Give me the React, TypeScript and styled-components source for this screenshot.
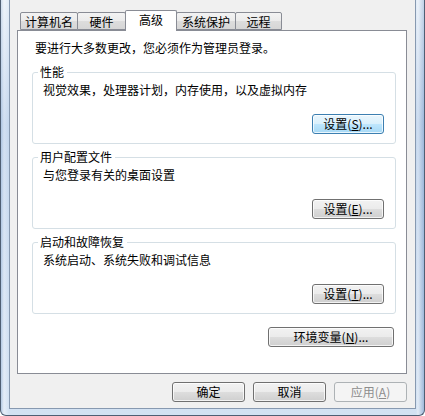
import React from 'react';
import styled, { createGlobalStyle } from 'styled-components';

const GlobalStyle = createGlobalStyle`
  html, body {
    margin: 0;
    padding: 0;
    background: #ffffff;
  }
  body {
    font-family: "Noto Sans CJK SC", "Liberation Sans", sans-serif;
    font-size: 12px;
    line-height: 14px;
    color: #000;
  }
`;

const Frame = styled.div`
  width: 425px;
  height: 416px;
  box-sizing: border-box;
  padding: 0 8px 6px 8px;
  border: 1px solid #4f5f74;
  border-top: none;
  border-radius: 0 0 6px 6px;
  background:
    linear-gradient(to bottom, rgba(255, 255, 255, 0.35), rgba(150, 180, 220, 0.25) 30%, rgba(255, 255, 255, 0) 100%),
    linear-gradient(
      to right,
      #b6cbe4 0,
      #e6eef8 3px,
      #d3e2f3 8px,
      #d3e2f3 calc(100% - 8px),
      #e2ebf6 calc(100% - 6px),
      #9fb9da 100%
    );
  display: flex;
`;

const Client = styled.div`
  flex: 1;
  display: flex;
  flex-direction: column;
  padding: 10px 8px 6px 7px;
  background: #f0f0f0;
  border: 1px solid #8799b0;
  border-top: none;
`;

const TabStrip = styled.div`
  height: 20px;
  display: flex;
  align-items: flex-end;
  padding-left: 3px;
`;

const Tab = styled.div<{ $w: number; $active?: boolean }>`
  width: ${(p) => p.$w}px;
  height: ${(p) => (p.$active ? 21 : 18)}px;
  margin-bottom: ${(p) => (p.$active ? -1 : 0)}px;
  margin-left: -1px;
  box-sizing: border-box;
  border: 1px solid #898c95;
  border-bottom: ${(p) => (p.$active ? 'none' : '1px solid #898c95')};
  border-radius: 2px 2px 0 0;
  background: ${(p) =>
    p.$active
      ? '#ffffff'
      : 'linear-gradient(#f3f3f3 0%, #ebebeb 50%, #dddddd 51%, #d6d6d6 100%)'};
  position: relative;
  z-index: ${(p) => (p.$active ? 2 : 1)};
  display: flex;
  align-items: ${(p) => (p.$active ? 'flex-start' : 'center')};
  padding-top: ${(p) => (p.$active ? 2 : 1)}px;
  justify-content: center;
  white-space: nowrap;

  &:first-child {
    margin-left: 0;
  }
`;

const Panel = styled.div`
  height: 344px;
  box-sizing: border-box;
  background: #ffffff;
  border: 1px solid #898c95;
  padding: 10px 10px 0 14px;
  display: flex;
  flex-direction: column;
`;

const Notice = styled.div`
  margin-left: 3px;
  height: 14px;
`;

const Group = styled.fieldset<{ $gap: number }>`
  margin: ${(p) => p.$gap}px 0 0 0;
  padding: 4px 11px 9px 9px;
  border: 1px solid #d5dfe5;
  border-radius: 3px;
  display: flex;
  flex-direction: column;
  min-inline-size: 0;
`;

const Legend = styled.legend`
  padding: 0 3px 0 2px;
  margin-left: -4px;
  line-height: 14px;
`;

const Desc = styled.div`
  height: 14px;
  padding-left: 1px;
`;

const Button = styled.button<{ $w: number; $tone?: 'default' | 'disabled' }>`
  width: ${(p) => p.$w}px;
  height: 20px;
  box-sizing: border-box;
  padding: 0;
  font: inherit;
  font-size: 12px;
  line-height: 14px;
  color: ${(p) => (p.$tone === 'disabled' ? '#8d8d8d' : '#000')};
  border-radius: 3px;
  border: 1px solid
    ${(p) =>
      p.$tone === 'default' ? '#3c7fb1' : p.$tone === 'disabled' ? '#adb2b5' : '#707070'};
  background: ${(p) =>
    p.$tone === 'default'
      ? 'linear-gradient(#eaf6fd 0%, #d9f0fc 50%, #bee6fd 51%, #a7d9f5 100%)'
      : p.$tone === 'disabled'
        ? '#f4f4f4'
        : 'linear-gradient(#f2f2f2 0%, #ebebeb 50%, #dddddd 51%, #cfcfcf 100%)'};
  box-shadow: ${(p) =>
    p.$tone === 'disabled' ? 'none' : 'inset 0 0 0 1px rgba(255,255,255,0.75)'};
  display: flex;
  align-items: center;
  justify-content: center;
  white-space: nowrap;
`;

const ButtonRow = styled.div<{ $top: number; $right: number }>`
  display: flex;
  justify-content: flex-end;
  gap: 8px;
  margin-top: ${(p) => p.$top}px;
  margin-right: ${(p) => p.$right}px;
`;

const Key = styled.u`
  text-decoration: underline;
  text-underline-offset: 1px;
`;

const groups = [
  { title: '性能', desc: '视觉效果，处理器计划，内存使用，以及虚拟内存', key: 'S', tone: 'default' as const, gap: 10 },
  { title: '用户配置文件', desc: '与您登录有关的桌面设置', key: 'E', gap: 6 },
  { title: '启动和故障恢复', desc: '系统启动、系统失败和调试信息', key: 'T', gap: 6 },
];

const tabs = [
  { label: '计算机名', w: 58 },
  { label: '硬件', w: 49 },
  { label: '高级', w: 52, active: true },
  { label: '系统保护', w: 60 },
  { label: '远程', w: 47 },
];

const App = () => {
  return (
    <>
      <GlobalStyle />
      <Frame>
        <Client>
          <TabStrip>
            {tabs.map((t) => (
              <Tab key={t.label} $w={t.w} $active={t.active}>
                {t.label}
              </Tab>
            ))}
          </TabStrip>
          <Panel>
            <Notice>要进行大多数更改，您必须作为管理员登录。</Notice>
            {groups.map((g) => (
              <Group key={g.title} $gap={g.gap}>
                <Legend>{g.title}</Legend>
                <Desc>{g.desc}</Desc>
                <ButtonRow $top={17} $right={0}>
                  <Button $w={72} $tone={g.tone}>
                    设置(<Key>{g.key}</Key>)...
                  </Button>
                </ButtonRow>
              </Group>
            ))}
            <ButtonRow $top={13} $right={2}>
              <Button $w={126}>
                环境变量(<Key>N</Key>)...
              </Button>
            </ButtonRow>
          </Panel>
          <ButtonRow $top={8} $right={0}>
            <Button $w={73}>确定</Button>
            <Button $w={73}>取消</Button>
            <Button $w={73} $tone="disabled">
              应用(<Key>A</Key>)
            </Button>
          </ButtonRow>
        </Client>
      </Frame>
    </>
  );
};

export default App;
